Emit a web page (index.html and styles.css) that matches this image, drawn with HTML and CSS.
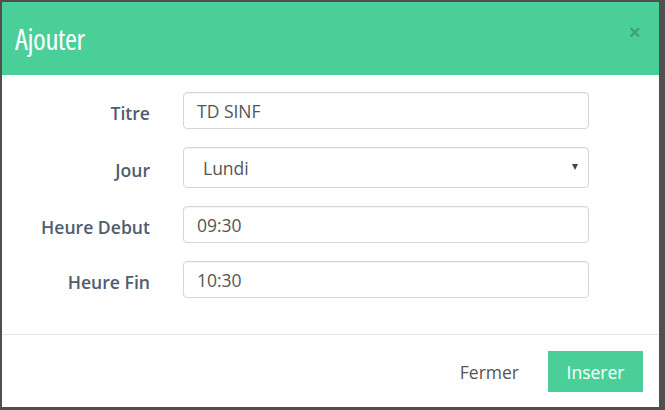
FILE: index.html
```html
<!DOCTYPE html>
<html lang="fr">
<head>
<meta charset="utf-8">
<title>Ajouter</title>
<link rel="stylesheet" href="styles.css">
</head>
<body>
<div class="backdrop">
  <div class="modal">
    <div class="modal-header">
      <h4 class="modal-title">Ajouter</h4>
      <span class="close">&times;</span>
    </div>
    <form class="modal-body">
      <div class="row">
        <label class="lbl">Titre</label>
        <div class="field">TD SINF</div>
      </div>
      <div class="row">
        <label class="lbl">Jour</label>
        <div class="field select"><span>Lundi</span><span class="caret"></span></div>
      </div>
      <div class="row">
        <label class="lbl">Heure Debut</label>
        <div class="field">09:30</div>
      </div>
      <div class="row">
        <label class="lbl">Heure Fin</label>
        <div class="field">10:30</div>
      </div>
    </form>
    <div class="modal-footer">
      <button type="button" class="btn btn-link">Fermer</button>
      <button type="button" class="btn btn-primary">Inserer</button>
    </div>
  </div>
</div>
</body>
</html>
```

FILE: styles.css
```css
html, body {
  margin: 0;
  padding: 0;
  height: 100%;
  background: #505050;
}
.backdrop {
  padding: 2px 6px 3px 2px;
  box-sizing: border-box;
  height: 410px;
}
.modal {
  background: #fff;
  width: 657px;
  height: 405px;
  display: flex;
  flex-direction: column;
  font-family: "Open Sans", "Noto Sans", sans-serif;
}
.modal-header {
  height: 73px;
  background: #4bcf99;
  display: flex;
  align-items: center;
  justify-content: space-between;
  padding: 0 18px 0 13px;
  box-sizing: border-box;
}
.modal-title {
  margin: 0;
  color: #fff;
  font-weight: 400;
  font-size: 29px;
  font-stretch: 80%;
  letter-spacing: -0.4px;
}
.close {
  color: #3c9c76;
  font-size: 22px;
  font-weight: 600;
  line-height: 1;
  margin-top: -16px;
}
.modal-body {
  padding: 17px 0 0 0;
  display: flex;
  flex-direction: column;
  gap: 18px;
  height: 260px;
  box-sizing: border-box;
  border-bottom: 1px solid #e5e5e5;
  margin: 0;
}
.row {
  display: grid;
  grid-template-columns: 148px 406px;
  column-gap: 33px;
  align-items: center;
}
.lbl {
  text-align: right;
  font-weight: 600;
  font-size: 17.6px;
  color: #4f5d6f;
  padding-top: 4px;
}
.field {
  height: 37px;
  box-sizing: border-box;
  border: 1px solid #d6d6d6;
  border-radius: 4px;
  box-shadow: inset 0 1px 1px rgba(0,0,0,0.05);
  padding: 0 13px;
  display: flex;
  align-items: center;
  font-size: 17.5px;
  color: #555;
}
.field.select {
  height: 41px;
  padding: 0 10px 0 19px;
  justify-content: space-between;
}
.caret {
  width: 0;
  height: 0;
  border-left: 3.5px solid transparent;
  border-right: 3.5px solid transparent;
  border-top: 6px solid #444;
  margin-top: -2px;
}
.modal-footer {
  flex: 1;
  display: flex;
  justify-content: flex-end;
  align-items: flex-start;
  padding: 16px 16px 0 0;
  gap: 17px;
}
.btn {
  font-family: "Open Sans", "Noto Sans", sans-serif;
  font-size: 17.5px;
  height: 41px;
  border: 0;
  border-radius: 0;
  padding: 0 12px;
  cursor: pointer;
}
.btn-link {
  background: transparent;
  color: #555;
}
.btn-primary {
  background: #4bcf99;
  color: #fff;
  width: 95px;
}
```
